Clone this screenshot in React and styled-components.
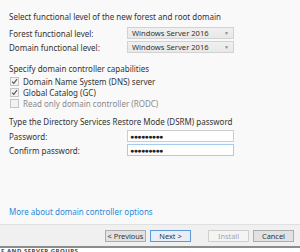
import React from 'react';
import styled, { createGlobalStyle } from 'styled-components';

const Global = createGlobalStyle`
  html, body {
    margin: 0;
    padding: 0;
    background: #f9f9f9;
  }
  body {
    font-family: "Noto Sans", "Open Sans", sans-serif;
    font-size: 8px;
    color: #333;
  }
`;

const Page = styled.div`
  width: 300px;
  height: 252px;
  display: flex;
  flex-direction: column;
  overflow: hidden;
  background: #f9f9f9;
`;

const Body = styled.div`
  flex: 1;
  padding: 11px 0 0 9px;
  display: flex;
  flex-direction: column;
`;

const Heading = styled.div`
  line-height: 12px;
  margin-top: ${p => p.top || 0}px;
  margin-bottom: ${p => (p.gap === undefined ? 4 : p.gap)}px;
`;

const FieldRow = styled.div`
  display: grid;
  grid-template-columns: 118px 107px;
  align-items: center;
  height: 12px;
  margin-bottom: 2px;
`;

const Combo = styled.div`
  height: 10px;
  border: 1px solid #d2d2d2;
  background: linear-gradient(#f0f0f0, #e8e8e8);
  display: flex;
  align-items: center;
  padding: 0 4px;
  justify-content: space-between;
  font-size: 7.6px;
  span.arrow {
    font-size: 5px;
    color: #888;
  }
`;

const TextBox = styled.div`
  height: 10px;
  border: 1px solid ${p => (p.focused ? '#a5cbee' : '#cdcdcd')};
  background: #fff;
  display: flex;
  align-items: center;
  padding: 0 2px;
  font-size: 7px;
  letter-spacing: -0.6px;
  color: #222;
`;

const CheckRow = styled.div`
  display: flex;
  align-items: center;
  height: 11px;
  gap: 4px;
  padding-left: 1px;
  color: ${p => (p.disabled ? '#8a8a8a' : '#333')};
`;

const Box = styled.div`
  width: 7px;
  height: 7px;
  border: 1px solid #c4c4c4;
  background: #f3f3f3;
  display: flex;
  align-items: center;
  justify-content: center;
`;

const Link = styled.a`
  color: #2b88d8;
  text-decoration: none;
  margin-top: auto;
  margin-bottom: 6px;
  line-height: 12px;
`;

const Footer = styled.div`
  height: 21px;
  border-top: 1px solid #e0e0e0;
  background: #f0f0f0;
  display: flex;
  align-items: center;
  padding: 0 6px 0 105px;
`;

const Button = styled.button`
  width: ${p => p.w || 41}px;
  height: 12px;
  margin-right: ${p => p.mr === undefined ? 4 : p.mr}px;
  padding: 0;
  font-family: inherit;
  font-size: 7.4px;
  line-height: 10px;
  color: ${p => (p.disabled ? '#a6a6a6' : '#333')};
  background: ${p => (p.disabled ? '#f4f4f4' : p.primary ? '#e8eef5' : '#e1e1e1')};
  border: 1px solid ${p => (p.disabled ? '#cfcfcf' : p.primary ? '#5b9bd5' : '#adadad')};
`;

const Under = styled.div`
  height: 4px;
  border-top: 2px solid #8c8c8c;
  background: #fff;
  font-size: 6px;
  font-weight: bold;
  color: #444;
  line-height: 6px;
  padding-left: 1px;
  overflow: hidden;
  letter-spacing: 0.5px;
`;

const Check = () => (
  <svg width="7" height="7" viewBox="0 0 7 7">
    <path d="M1 3.6 L2.8 5.4 L6 1.2" fill="none" stroke="#555" strokeWidth="1.1" />
  </svg>
);

export default function App() {
  return (
    <Page>
      <Global />
      <Body>
        <Heading>Select functional level of the new forest and root domain</Heading>
        <FieldRow>
          <span>Forest functional level:</span>
          <Combo>Windows Server 2016<span className="arrow">▼</span></Combo>
        </FieldRow>
        <FieldRow>
          <span>Domain functional level:</span>
          <Combo>Windows Server 2016<span className="arrow">▼</span></Combo>
        </FieldRow>
        <Heading top={8} gap={1}>Specify domain controller capabilities</Heading>
        <CheckRow><Box><Check /></Box>Domain Name System (DNS) server</CheckRow>
        <CheckRow><Box><Check /></Box>Global Catalog (GC)</CheckRow>
        <CheckRow disabled><Box />Read only domain controller (RODC)</CheckRow>
        <Heading top={7} gap={2}>Type the Directory Services Restore Mode (DSRM) password</Heading>
        <FieldRow>
          <span>Password:</span>
          <TextBox>●●●●●●●●●</TextBox>
        </FieldRow>
        <FieldRow>
          <span>Confirm password:</span>
          <TextBox focused>●●●●●●●●●</TextBox>
        </FieldRow>
        <Link href="#">More about domain controller options</Link>
      </Body>
      <Footer>
        <Button>&lt; Previous</Button>
        <Button primary mr={17}>Next &gt;</Button>
        <Button disabled>Install</Button>
        <Button mr={0}>Cancel</Button>
      </Footer>
      <Under>E AND SERVER GROUPS</Under>
    </Page>
  );
}
